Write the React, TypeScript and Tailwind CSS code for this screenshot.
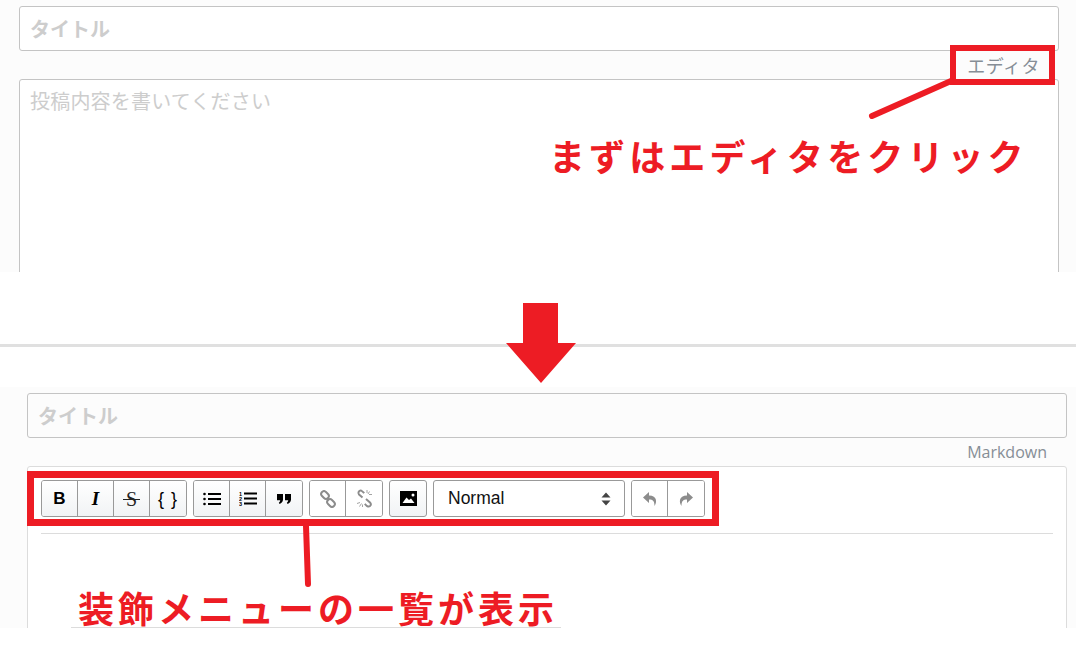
import type { ReactNode } from 'react';

function ToolButton({ children, disabled = false }: { children: ReactNode; disabled?: boolean }) {
  return (
    <div
      className={`flex h-full w-[36px] items-center justify-center border-r border-[#999] last:border-r-0 ${
        disabled ? 'bg-white text-[#8c8c8c]' : 'bg-gradient-to-b from-white to-[#f1f3f5] text-black'
      }`}
    >
      {children}
    </div>
  );
}

function ToolGroup({ children }: { children: ReactNode }) {
  return <div className="flex h-[37px] overflow-hidden rounded-[3px] border border-[#999]">{children}</div>;
}

function ListUlIcon() {
  return (
    <svg width="18" height="14" viewBox="0 0 18 14" fill="currentColor">
      <circle cx="1.5" cy="2" r="1.3" />
      <circle cx="1.5" cy="7" r="1.3" />
      <circle cx="1.5" cy="12" r="1.3" />
      <rect x="5" y="1" width="13" height="2" />
      <rect x="5" y="6" width="13" height="2" />
      <rect x="5" y="11" width="13" height="2" />
    </svg>
  );
}

function ListOlIcon() {
  return (
    <svg width="18" height="15" viewBox="0 0 18 15" fill="currentColor">
      <text x="0" y="4.5" fontSize="5.5" fontWeight="700" fontFamily="Liberation Sans, sans-serif">1</text>
      <text x="0" y="9.5" fontSize="5.5" fontWeight="700" fontFamily="Liberation Sans, sans-serif">2</text>
      <text x="0" y="14.5" fontSize="5.5" fontWeight="700" fontFamily="Liberation Sans, sans-serif">3</text>
      <rect x="5" y="1.5" width="13" height="2" />
      <rect x="5" y="6.5" width="13" height="2" />
      <rect x="5" y="11.5" width="13" height="2" />
    </svg>
  );
}

function QuoteIcon() {
  return (
    <svg width="14" height="10" viewBox="0 0 14 10" fill="currentColor">
      <path d="M0 0H6V5.5C6 7.5 4.5 9.5 2.5 10L1.8 8.6C2.8 8 3.2 7.2 3.2 6.2H0Z" />
      <path d="M8 0H14V5.5C14 7.5 12.5 9.5 10.5 10L9.8 8.6C10.8 8 11.2 7.2 11.2 6.2H8Z" />
    </svg>
  );
}

function LinkIcon() {
  return (
    <svg width="16" height="18" viewBox="0 0 16 18" fill="none" stroke="currentColor" strokeWidth="2">
      <rect x="0.8" y="2.2" width="8.4" height="5.6" rx="2.8" transform="rotate(45 5 5)" />
      <rect x="6.8" y="10.2" width="8.4" height="5.6" rx="2.8" transform="rotate(45 11 13)" />
      <path d="M7.5 8L8.5 10" />
    </svg>
  );
}

function UnlinkIcon() {
  return (
    <svg width="17" height="19" viewBox="0 0 17 19" fill="none" stroke="currentColor">
      <path d="M6.5 8.5L3 5.5C1.5 4 3 1.2 5.2 1.6C6 1.8 7 2.8 8.2 4.2" strokeWidth="2" />
      <path d="M10 10L14 13.5C15.8 15.2 14.4 18 12 17.5C11 17.2 10 16.2 8.8 14.8" strokeWidth="2" />
      <path d="M11 1V4M13.5 2.5L12 5M16 5.5H13M3.5 17.5L5.5 14.5M1 14.5L4 13.5M6.5 18V15.5" strokeWidth="0.8" />
    </svg>
  );
}

function ImageIcon() {
  return (
    <svg width="17" height="15" viewBox="0 0 17 15">
      <rect width="17" height="15" fill="#000" />
      <path d="M2.5 12L6.5 6.5L9 9L11 7.5L14.5 12Z" fill="#fff" />
      <circle cx="13" cy="4" r="1.5" fill="#fff" />
    </svg>
  );
}

function ReplyIcon({ flip = false }: { flip?: boolean }) {
  return (
    <svg width="16" height="16" viewBox="0 0 16 16" fill="currentColor" className={flip ? '-scale-x-100' : ''}>
      <path d="M7 1L1 6.5L7 12V8.5C11 8.5 12.5 10 12.5 15C15 11.5 15.5 4.5 7 4.5Z" />
    </svg>
  );
}

function Toolbar() {
  return (
    <div className="flex gap-[6px]">
      <ToolGroup>
        <ToolButton>
          <span className="font-['Liberation_Sans',sans-serif] text-[17px] font-bold leading-none">B</span>
        </ToolButton>
        <ToolButton>
          <span className="font-['Liberation_Serif',serif] text-[19px] font-bold italic leading-none">I</span>
        </ToolButton>
        <ToolButton>
          <span className="relative font-['Liberation_Serif',serif] text-[20px] leading-none text-[#222]">
            S
            <span className="absolute left-[-3px] top-[10px] h-[1px] w-[17px] bg-[#222]" />
          </span>
        </ToolButton>
        <ToolButton>
          <span className="font-['Liberation_Sans',sans-serif] text-[18px] leading-none tracking-[1px]">{'{ }'}</span>
        </ToolButton>
      </ToolGroup>
      <ToolGroup>
        <ToolButton>
          <ListUlIcon />
        </ToolButton>
        <ToolButton>
          <ListOlIcon />
        </ToolButton>
        <ToolButton>
          <QuoteIcon />
        </ToolButton>
      </ToolGroup>
      <ToolGroup>
        <ToolButton disabled>
          <LinkIcon />
        </ToolButton>
        <ToolButton disabled>
          <UnlinkIcon />
        </ToolButton>
      </ToolGroup>
      <div className="flex h-[37px] w-[38px] items-center justify-center rounded-[3px] border border-[#999] bg-gradient-to-b from-white to-[#f1f3f5]">
        <ImageIcon />
      </div>
      <div className="flex h-[37px] w-[192px] items-center justify-between rounded-[3px] border border-[#999] bg-white pl-[14px] pr-[13px] font-['Liberation_Sans',sans-serif] text-[17.5px] text-[#111]">
        <span>Normal</span>
        <svg width="10" height="14" viewBox="0 0 10 14" className="text-[#444]">
          <path d="M5 0.5L9.5 5.5H0.5ZM0.5 8.5H9.5L5 13.5Z" fill="currentColor" />
        </svg>
      </div>
      <ToolGroup>
        <ToolButton disabled>
          <ReplyIcon />
        </ToolButton>
        <ToolButton disabled>
          <ReplyIcon flip />
        </ToolButton>
      </ToolGroup>
    </div>
  );
}

function Callout({ className }: { className: string }) {
  return <div className={`pointer-events-none absolute border-[#ed1c24] ${className}`} />;
}

export default function App() {
  return (
    <div className="relative h-[662px] w-full overflow-hidden bg-white font-['Noto_Sans_CJK_JP',sans-serif]">
      <section className="relative h-[272px] overflow-hidden bg-[#fcfcfc] pl-[19px] pr-[17px] pt-[6px]">
        <div className="flex h-[45px] items-center rounded-[3px] border border-[#c4c4c4] bg-white px-[10px] text-[20px] font-bold text-[#cdcdcd]">
          タイトル
        </div>
        <div className="flex h-[28px] justify-end pr-[19px] pt-[1px] text-[18px] leading-[26px] tracking-[0.5px] text-[#868e96]">エディタ</div>
        <div className="h-[300px] rounded-[3px] border border-[#c4c4c4] bg-white px-[10px] py-[6px] text-[20px] leading-[30px] tracking-[0.2px] text-[#cdcdcd]">
          投稿内容を書いてください
        </div>
        <Callout className="left-[950px] top-[45px] h-[40px] w-[105px] border-[6px]" />
        <svg className="absolute left-0 top-0" width="1076" height="272">
          <line x1="951" y1="81" x2="872" y2="116" stroke="#ed1c24" strokeWidth="6" strokeLinecap="round" />
        </svg>
        <div className="absolute left-[549px] top-[130px] text-[36px] font-bold leading-[50px] tracking-[4.1px] whitespace-nowrap text-[#ed1c24]">
          まずはエディタをクリック
        </div>
      </section>

      <div className="h-[72px]" />
      <div className="h-[3px] bg-[#e0e0e0]" />
      <div className="h-[40px]" />

      <svg className="absolute left-[506px] top-[303px]" width="70" height="80" viewBox="0 0 70 80">
        <path d="M17 0 H52 V40 H70 L35 80 L0 40 H17 Z" fill="#ed1c24" />
      </svg>

      <section className="relative h-[241px] overflow-hidden bg-[#fcfcfc] pl-[27px] pr-[9px] pt-[6px]">
        <div className="flex h-[45px] items-center rounded-[3px] border border-[#c4c4c4] bg-[#fcfcfc] px-[10px] text-[20px] font-bold text-[#cdcdcd]">
          タイトル
        </div>
        <div className="flex h-[28px] justify-end pr-[20px] pt-[2px] font-['Open_Sans',sans-serif] text-[16px] leading-[24px] text-[#868e96]">
          Markdown
        </div>
        <div className="h-[300px] rounded-[3px] border border-[#dcdcdc] bg-white px-[13px] pt-[13px]">
          <Toolbar />
          <div className="mt-[16px] h-px bg-[#dcdcdc]" />
        </div>
        <Callout className="left-[27px] top-[84px] h-[55px] w-[692px] border-[7px]" />
        <svg className="absolute left-0 top-0" width="1076" height="241">
          <line x1="306" y1="139" x2="308" y2="197" stroke="#ed1c24" strokeWidth="6" strokeLinecap="round" />
        </svg>
        <div className="absolute left-[71px] top-[201px] w-[490px] border-b border-[#dcdcdc] bg-white pl-[7px] text-[36px] font-bold leading-[39px] tracking-[4px] whitespace-nowrap text-[#ed1c24]">
          装飾メニューの一覧が表示
        </div>
      </section>
    </div>
  );
}
